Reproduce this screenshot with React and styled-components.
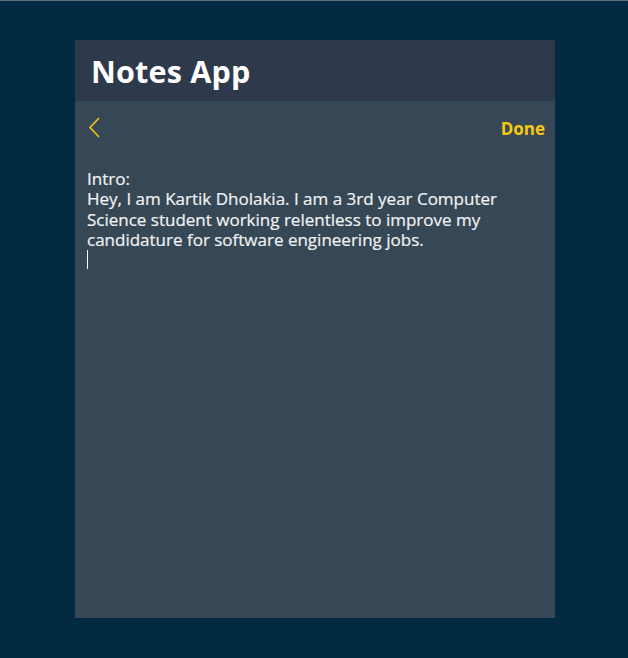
import React from "react";
import styled, { createGlobalStyle } from "styled-components";

const GlobalStyle = createGlobalStyle`
  html, body {
    margin: 0;
    padding: 0;
    height: 100%;
    background: #022a43;
  }
  body {
    font-family: "Open Sans", "Noto Sans", sans-serif;
    border-top: 1px solid #666a6e;
    box-sizing: border-box;
  }
`;

const Page = styled.div`
  display: flex;
  justify-content: center;
  padding: 39px 0 0 2px;
`;

const Card = styled.div`
  width: 480px;
  height: 578px;
  background: #364856;
  display: flex;
  flex-direction: column;
`;

const Header = styled.header`
  height: 61px;
  background: #2e3a4b;
  display: flex;
  align-items: center;
  padding-left: 16px;
`;

const Title = styled.h1`
  margin: 0;
  color: #ffffff;
  font-size: 30.5px;
  font-weight: 700;
  letter-spacing: 0.2px;
`;

const Toolbar = styled.div`
  display: flex;
  justify-content: space-between;
  align-items: center;
  padding: 14px 10px 0 13px;
  height: 26px;
`;

const IconButton = styled.button`
  background: none;
  border: none;
  padding: 0;
  display: flex;
  cursor: pointer;
`;

const DoneButton = styled.button`
  background: none;
  border: none;
  padding: 0;
  color: #f9c80e;
  font-family: inherit;
  font-size: 17px;
  font-weight: 700;
  cursor: pointer;
`;

const NoteBody = styled.div`
  margin: 28px 0 0 12px;
  width: 430px;
  color: #f2f2f2;
  font-size: 17px;
  line-height: 20.3px;
  white-space: pre-wrap;
  -webkit-text-stroke: 0.2px #f2f2f2;
`;

const Caret = styled.span`
  display: inline-block;
  width: 1px;
  height: 19px;
  background: #ffffff;
  vertical-align: top;
`;

const note =
  "Intro:\nHey, I am Kartik Dholakia. I am a 3rd year Computer Science student working relentless to improve my candidature for software engineering jobs.\n";

export default function App() {
  return (
    <>
      <GlobalStyle />
      <Page>
        <Card>
          <Header>
            <Title>Notes App</Title>
          </Header>
          <Toolbar>
            <IconButton aria-label="Back">
              <svg width="14" height="22" viewBox="0 0 14 22" fill="none">
                <path d="M11 1 L2 10.5 L11 20" stroke="#f9c80e" strokeWidth="1.5" />
              </svg>
            </IconButton>
            <DoneButton>Done</DoneButton>
          </Toolbar>
          <NoteBody>
            {note}
            <Caret />
          </NoteBody>
        </Card>
      </Page>
    </>
  );
}
